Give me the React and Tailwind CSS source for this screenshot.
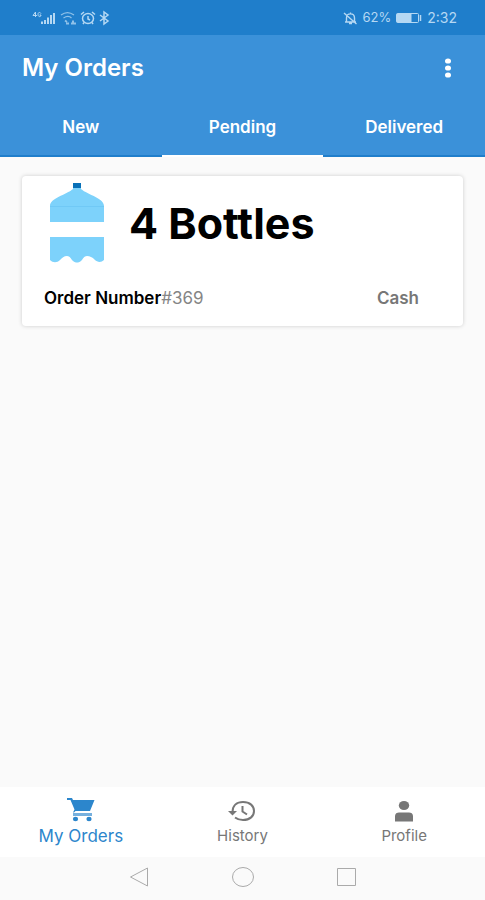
import { useState } from "react";

const tabs = ["New", "Pending", "Delivered"];

const orders = [{ id: 369, bottles: 4, payment: "Cash", status: "Pending" }];

function StatusBar() {
  return (
    <div className="flex h-[35px] items-center justify-between bg-[#1f7ecb] pr-7 pl-8 text-sm text-[#b5d8f3]">
      <div className="flex items-center gap-0.5">
        {/* mobile signal */}
        <svg className="h-4 w-6" viewBox="0 0 24 16" fill="none" stroke="currentColor">
          <path d="M3.500 2v5M3.500 2L1 5.500h4M9 3.500C8 2 6 2 6 4.500s3 3 3 .5H7.500" />
          <path strokeWidth="2" d="M10 14v-2.500M13 14V10M16 14V7.500M19 14V5M22 14V3" />
        </svg>
        <svg className="h-4 w-5" viewBox="0 0 20 16" fill="none" stroke="currentColor" opacity=".75">
          <path strokeWidth="1.300" d="M3 5c4-3 9-3 13 0M5.500 8c3-2 6-2 8 0" />
          <path strokeWidth="1.800" d="M7 10.500l2 1.500M8 13.500h3M13 13.500h5M14 11.500h2" />
        </svg>
        {/* alarm */}
        <svg className="h-4 w-4" viewBox="0 0 16 16" fill="none" stroke="currentColor" strokeWidth="1.500">
          <ellipse cx="8" cy="8.500" rx="5.500" ry="5" />
          <path d="M8 6v3l2 1M1 4.500L4 2M15 4.500L12 2M4 12.500L3 14M12 12.500l1 1.500" />
        </svg>
        {/* bluetooth */}
        <svg className="h-4 w-3" viewBox="0 0 12 16" fill="none" stroke="currentColor" strokeWidth="1.500">
          <path d="M2 5l8 6-4 3V2l4 3-8 6" />
        </svg>
      </div>
      <div className="flex items-center gap-1">
        <svg className="h-4 w-4" viewBox="0 0 16 16" fill="none" stroke="currentColor" strokeWidth="1.400">
          <path d="M3 12h11M4.500 12V8c0-5.500 8-5.500 8 0v4M8.500 4V2.500M7 13.500h3M2 3l12.500 11" />
        </svg>
        <span className="text-[13px]">62%</span>
        <svg className="h-3 w-7" viewBox="0 0 28 12" fill="none" stroke="currentColor">
          <rect x="1.500" y="1.500" width="22" height="9" rx="1" />
          <path fill="currentColor" d="M2 2h14v8H2z" />
          <path strokeWidth="1.500" d="M25.500 3v6" />
        </svg>
        <span>2:32</span>
      </div>
    </div>
  );
}

function BottleIcon() {
  return (
    <svg className="h-20 w-14" viewBox="0 0 56 80">
      <path fill="#7dd2fb" d="M24 4h8v2c7 6 23 9 23 17v16H1V23C1 15 17 12 24 6z" />
      <path fill="#70c9f6" d="M1 23h54v1H1z" />
      <path fill="#0870b8" d="M24 0h8v5h-8z" />
      <path
        fill="#7dd2fb"
        d="M1 54h54v23c-3 3-7 2-9 0-3-3-5-4-8-4s-4 3-6 5c-3 2-5 2-8 0-2-2-3-5-6-5s-5 2-7 4c-3 3-7 3-10 0z"
      />
    </svg>
  );
}

function OrderCard({ order }) {
  return (
    <li className="rounded-sm bg-white px-[22px] pt-[7px] pb-4 shadow-[0_0_4px_rgba(0,0,0,0.18)]">
      <div className="flex items-center gap-6 pl-[5px]">
        <BottleIcon />
        <h2 className="text-[43px] leading-none font-bold text-black">{order.bottles} Bottles</h2>
      </div>
      <div className="mt-[23px] flex items-center justify-between pr-[22px]">
        <p className="text-[17px] leading-6 text-[#858585]">
          <span className="font-semibold text-black">Order Number</span>#{order.id}
        </p>
        <p className="text-[17px] leading-6 font-semibold text-[#777]">{order.payment}</p>
      </div>
    </li>
  );
}

function BottomNav() {
  return (
    <nav className="grid h-[70px] grid-cols-3 bg-white text-[15px] text-[#777]">
      <a href="#orders" className="flex flex-col items-center pt-[11px] text-[17px] text-[#2c86cc]">
        <svg className="h-6 w-7" viewBox="0 0 28 24" fill="currentColor">
          <path d="M0 0h5l1 2h21.500L23 13H8.500L7 14.500H6l1.500-3L3.500 2H0z" />
          <path opacity=".65" d="M6 15h19v3H6z" />
          <ellipse cx="8.500" cy="21" rx="2.600" ry="2.200" />
          <ellipse cx="22" cy="21" rx="2.600" ry="2.200" />
        </svg>
        <span className="leading-7">My Orders</span>
      </a>
      <a href="#history" className="flex flex-col items-center pt-[13px]">
        <svg className="h-[22px] w-7" viewBox="0 0 28 22" fill="none" stroke="currentColor" strokeWidth="2">
          <path d="M4.500 12C4.500 5.500 9 2 15 2c7 0 11 4 11 9s-4 9-11 9c-3.500 0-6-1-8-2.500" />
          <path d="M14.500 6v5.500l4.500 3" />
          <path fill="currentColor" stroke="none" d="M0 11h9l-4.500 4.500z" />
        </svg>
        <span className="leading-7">History</span>
      </a>
      <a href="#profile" className="flex flex-col items-center pt-[13px]">
        <svg className="h-[22px] w-5" viewBox="0 0 20 22" fill="currentColor">
          <ellipse cx="10" cy="5.500" rx="5.200" ry="4.500" />
          <path d="M1 21.500V16c0-2.500 2-3.500 4-3.500h10c2 0 4 1 4 3.500v5.500z" />
        </svg>
        <span className="leading-7">Profile</span>
      </a>
    </nav>
  );
}

function SystemNav() {
  return (
    <div className="flex h-[43px] items-center justify-center gap-20 pb-1">
      <button aria-label="Back">
        <svg className="h-6 w-6" viewBox="0 0 24 24" fill="none" stroke="#aaa">
          <path d="M20.500 3v18L3.500 12z" />
        </svg>
      </button>
      <button aria-label="Home">
        <svg className="h-6 w-6" viewBox="0 0 24 24" fill="none" stroke="#aaa">
          <ellipse cx="12" cy="12" rx="10.500" ry="9.500" />
        </svg>
      </button>
      <button aria-label="Recent apps">
        <svg className="h-6 w-6" viewBox="0 0 24 24" fill="none" stroke="#aaa">
          <path d="M2.500 3.500h18v17h-18z" />
        </svg>
      </button>
    </div>
  );
}

function App() {
  const [activeTab, setActiveTab] = useState("Pending");
  const visible = orders.filter((order) => order.status === activeTab);

  return (
    <div className="flex min-h-screen flex-col bg-[#fafafa] font-[Inter,Roboto,sans-serif]">
      <StatusBar />
      <header className="bg-[#3b91d9] text-white">
        <div className="flex h-[66px] items-center justify-between pr-[25px] pl-[22px]">
          <h1 className="text-2xl font-semibold">My Orders</h1>
          <button aria-label="More options" className="flex w-6 justify-center">
            <svg className="h-5 w-2" viewBox="0 0 8 20" fill="currentColor">
              <ellipse cx="4" cy="3" rx="3" ry="2.600" />
              <ellipse cx="4" cy="10" rx="3" ry="2.600" />
              <ellipse cx="4" cy="17" rx="3" ry="2.600" />
            </svg>
          </button>
        </div>
        <div role="tablist" className="grid grid-cols-3">
          {tabs.map((tab) => (
            <button
              key={tab}
              role="tab"
              aria-selected={tab === activeTab}
              onClick={() => setActiveTab(tab)}
              className={`h-14 border-b-2 text-[17px] font-semibold ${
                tab === activeTab ? "border-white" : "border-[#1f7ecb]"
              }`}
            >
              {tab}
            </button>
          ))}
        </div>
      </header>

      <main className="flex-1 px-[22px] pt-[19px]">
        <ul className="space-y-4">
          {visible.map((order) => (
            <OrderCard key={order.id} order={order} />
          ))}
        </ul>
      </main>

      <BottomNav />
      <SystemNav />
    </div>
  );
}

export default App;
